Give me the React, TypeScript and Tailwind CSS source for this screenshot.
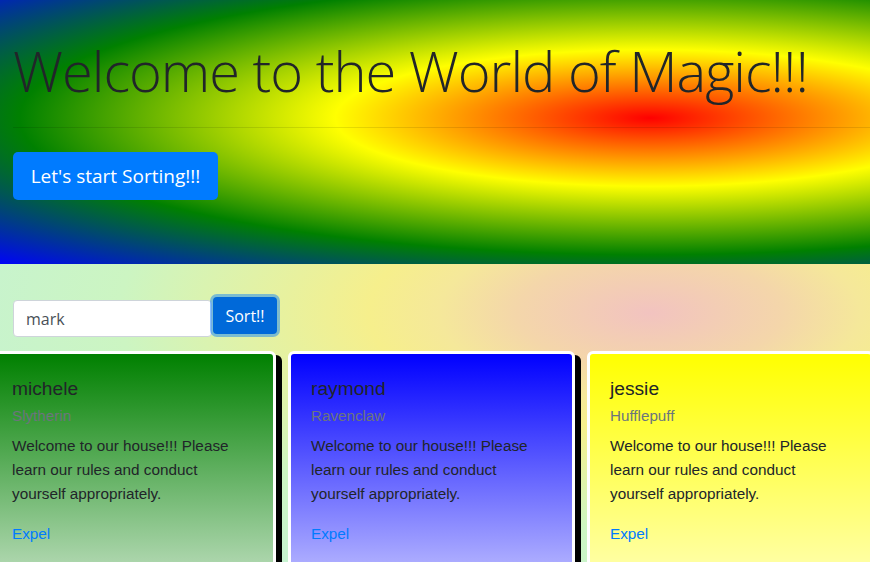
import React from "react";

const houses = [
  { name: "michele", house: "Slytherin", bg: "linear-gradient(to bottom, #008000 0px, #ffffff 310px)" },
  { name: "raymond", house: "Ravenclaw", bg: "linear-gradient(to bottom, #0000ff 0px, #ffffff 310px)" },
  { name: "jessie", house: "Hufflepuff", bg: "linear-gradient(to bottom, #ffff00 0px, #ffffff 330px)" },
];

export default function App() {
  return (
    <div className="w-[870px] h-[562px] overflow-hidden bg-white">
      <header
        className="h-[264px] px-[13px] pt-[37px]"
        style={{
          background:
            "radial-gradient(ellipse 945px 205px at 650px 118px, #ff0000 0%, #ffff00 33.3%, #008000 66.7%, #0000ff 100%)",
        }}
      >
        <h1
          className="text-[56px] leading-[1.2] font-light tracking-[-1px] text-[#212529] whitespace-nowrap"
          style={{ fontFamily: '"Open Sans", sans-serif' }}
        >
          Welcome to the World of Magic!!!
        </h1>
        <hr className="mt-[23px] mr-[-13px] border-0 border-t border-black/10" />
        <button
          className="mt-[24px] w-[205px] h-[48px] rounded-[5px] bg-[#007bff] text-white text-[19px] flex items-center justify-center"
          style={{ fontFamily: '"Open Sans", sans-serif' }}
        >
          Let's start Sorting!!!
        </button>
      </header>
      <section
        className="h-[298px] pt-[30px]"
        style={{
          background:
            "radial-gradient(ellipse 780px 320px at 650px 49px, #f2c3c0 0%, #f4d6aa 17%, #f5e89a 27%, #f6ef8c 36%, #ccf5c2 68%, #c4f2d6 100%)",
        }}
      >
        <div className="flex items-start pl-[13px]" style={{ fontFamily: '"Open Sans", sans-serif' }}>
          <input
            defaultValue="mark"
            className="mt-[6px] w-[199px] h-[37px] rounded-[4px] border border-[#ced4da] bg-white pl-[12px] text-[16px] text-[#495057] outline-none"
          />
          <button className="ml-[1px] mt-[3px] w-[64px] h-[37px] rounded-[4px] bg-[#0069d9] text-white text-[16px] shadow-[0_0_0_3px_rgba(0,123,255,0.45)]">
            Sort!!
          </button>
        </div>
        <div className="mt-[14px] ml-[-11px] flex gap-[12px]">
          {houses.map((h) => (
            <div
              key={h.name}
              className="w-[287px] h-[330px] shrink-0 rounded-[6px] border-[3px] border-white shadow-[6px_4px_0_#000] pl-[20px] pr-[20px] pt-[23px]"
              style={{ background: h.bg, fontFamily: '"Liberation Sans", Arial, sans-serif' }}
            >
              <div className="text-[19.2px] leading-[23px] text-[#212529]">{h.name}</div>
              <div className="mt-[7px] text-[15.2px] leading-[18px] text-[#6c757d]">{h.house}</div>
              <p className="mt-[9px] text-[15.3px] leading-[24px] text-[#212529]">
                Welcome to our house!!! Please learn our rules and conduct yourself appropriately.
              </p>
              <a className="mt-[16px] block text-[15.3px] leading-[24px] text-[#007bff]">Expel</a>
            </div>
          ))}
        </div>
      </section>
    </div>
  );
}
